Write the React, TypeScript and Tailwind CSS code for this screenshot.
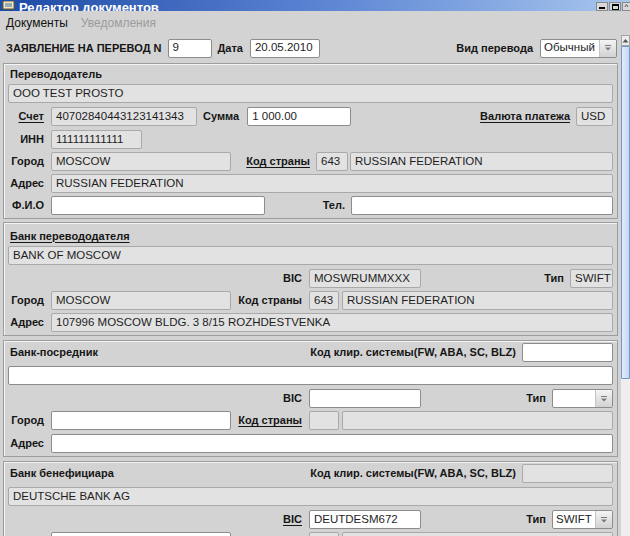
import React from 'react'

const box =
  'h-[19px] shrink-0 flex items-center px-[4px] rounded-[2px] border text-[11.5px] text-[#1e1e1e] whitespace-nowrap overflow-hidden'

function Field({ value = '', w = '', on = false }: { value?: string; w?: string; on?: boolean }) {
  return (
    <div className={`${box} ${on ? 'bg-white border-[#8c8c8c]' : 'bg-[#e2e2e2] border-[#a9a9a9]'} ${w}`}>
      {value}
    </div>
  )
}

function L({ children, u = false, w = '' }: { children: React.ReactNode; u?: boolean; w?: string }) {
  return (
    <span
      className={`shrink-0 whitespace-nowrap text-[11px] font-bold text-[#161616] ${u ? 'underline underline-offset-2' : ''} ${w}`}
    >
      {children}
    </span>
  )
}

function Arrow() {
  return (
    <svg width="8" height="6" viewBox="0 0 8 6">
      <line x1="1" y1="0.5" x2="7" y2="0.5" stroke="#7a7a7a" />
      <path d="M1 2.5 H7 L4 5.5 Z" fill="#7a7a7a" />
    </svg>
  )
}

function Combo({ value = '', w = '' }: { value?: string; w?: string }) {
  return (
    <div className={`h-[19px] shrink-0 flex rounded-[2px] border border-[#8c8c8c] bg-white overflow-hidden ${w}`}>
      <div className="flex-1 flex items-center px-[3px] text-[11.5px] text-[#1e1e1e]">{value}</div>
      <div className="w-[17px] flex items-center justify-center border-l border-[#c4c4c4] bg-gradient-to-b from-[#f4f4f4] to-[#d2d2d2]">
        <Arrow />
      </div>
    </div>
  )
}

function Panel({ children }: { children: React.ReactNode }) {
  return (
    <div className="ml-[3px] w-[615px] border border-[#9d9d9d] shadow-[inset_1px_1px_0_#f4f4f4] px-[4px] pb-[3px]">
      {children}
    </div>
  )
}

const row = 'flex items-center'

export default function App() {
  return (
    <div className="w-[630px] h-[536px] overflow-hidden bg-[#d3d3d3] font-['Liberation_Sans',Arial,sans-serif] flex flex-col">
      {/* Title bar (cut off) */}
      <div className="h-[11px] shrink-0 flex items-end justify-between bg-gradient-to-r from-[#1d4aa5] via-[#5a83d2] to-[#a9c6ee] overflow-hidden">
        <div className="flex items-end gap-[4px] pl-[2px]">
          <svg width="13" height="9" viewBox="0 0 13 9" className="mb-[1px]">
            <rect x="1" y="0" width="11" height="8" fill="#f3e7b8" stroke="#6b5a2a" />
            <line x1="3" y1="3" x2="10" y2="3" stroke="#3a6fc4" />
            <line x1="3" y1="5" x2="10" y2="5" stroke="#3a6fc4" />
          </svg>
          <span className="text-[13px] leading-[13px] font-bold text-white -mb-[3px]">Редактор документов</span>
        </div>
        <div className="flex gap-[1px]">
          <div className="w-[12px] h-[9px] bg-[#d8d8d8] border border-[#8a8a8a] flex items-end justify-center pb-[1px]">
            <div className="w-[6px] h-[2px] bg-black" />
          </div>
          <div className="w-[12px] h-[9px] bg-[#d8d8d8] border border-[#8a8a8a] flex items-center justify-center">
            <div className="w-[7px] h-[6px] border border-black border-t-2" />
          </div>
          <div className="w-[8px] h-[9px] bg-[#d8d8d8] border border-[#8a8a8a] border-r-0 flex items-center justify-center text-[8px] leading-none">
            ^
          </div>
        </div>
      </div>

      {/* Menu bar */}
      <div className="h-[24px] shrink-0 flex items-center gap-[13px] pl-[6px] text-[12px]">
        <span className="text-[#111]">Документы</span>
        <span className="text-[#9b9b9b]">Уведомления</span>
      </div>

      <div className="flex-1 flex min-h-0">
        <div className="w-[620px] shrink-0 flex flex-col">
          {/* Header */}
          <div className="h-[26px] shrink-0 flex items-center pl-[6px] pr-[3px]">
            <L>ЗАЯВЛЕНИЕ НА ПЕРЕВОД N</L>
            <Field on w="w-[44px] ml-[6px] border-[#7f9db9]" value="9" />
            <L w="ml-[6px]">Дата</L>
            <Field on w="w-[70px] ml-[7px]" value="20.05.2010" />
            <div className="flex-1" />
            <L>Вид перевода</L>
            <Combo w="w-[77px] ml-[7px]" value="Обычный" />
          </div>

          {/* Перевододатель */}
          <div className="mt-[2px]">
            <Panel>
              <div className="h-[20px] flex items-center pl-[2px]">
                <L>Перевододатель</L>
              </div>
              <div className={row}>
                <Field w="flex-1" value="OOO TEST PROSTO" />
              </div>
              <div className={`${row} mt-[4px]`}>
                <L u w="w-[36px] text-right">Счет</L>
                <Field w="w-[146px] ml-[7px]" value="40702840443123141343" />
                <L w="ml-[6px]">Сумма</L>
                <Field on w="w-[104px] ml-[8px]" value="1 000.00" />
                <div className="flex-1" />
                <L u>Валюта платежа</L>
                <Field w="w-[37px] ml-[6px]" value="USD" />
              </div>
              <div className={`${row} mt-[4px]`}>
                <L w="w-[36px] text-right">ИНН</L>
                <Field w="w-[91px] ml-[7px]" value="111111111111" />
              </div>
              <div className={`${row} mt-[3px]`}>
                <L w="w-[36px] text-right">Город</L>
                <Field w="w-[180px] ml-[7px]" value="MOSCOW" />
                <L u w="w-[79px] text-right">Код страны</L>
                <Field w="w-[32px] ml-[6px]" value="643" />
                <Field w="flex-1 ml-[2px]" value="RUSSIAN FEDERATION" />
              </div>
              <div className={`${row} mt-[3px]`}>
                <L w="w-[36px] text-right">Адрес</L>
                <Field w="flex-1 ml-[7px]" value="RUSSIAN FEDERATION" />
              </div>
              <div className={`${row} mt-[3px]`}>
                <L w="w-[36px] text-right">Ф.И.О</L>
                <Field on w="w-[214px] ml-[7px]" />
                <L w="flex-1 text-right">Тел.</L>
                <Field on w="w-[262px] ml-[6px]" />
              </div>
            </Panel>
          </div>

          {/* Банк перевододателя */}
          <div className="mt-[3px]">
            <Panel>
              <div className="h-[23px] flex items-center pl-[2px] pt-[3px]">
                <L u>Банк перевододателя</L>
              </div>
              <div className={row}>
                <Field w="flex-1" value="BANK OF MOSCOW" />
              </div>
              <div className={`${row} mt-[4px]`}>
                <L w="w-[294px] text-right">BIC</L>
                <Field w="w-[112px] ml-[7px]" value="MOSWRUMMXXX" />
                <div className="flex-1" />
                <L>Тип</L>
                <Field w="w-[43px] ml-[6px]" value="SWIFT" />
              </div>
              <div className={`${row} mt-[3px]`}>
                <L w="w-[36px] text-right">Город</L>
                <Field w="w-[180px] ml-[7px]" value="MOSCOW" />
                <L w="w-[71px] text-right">Код страны</L>
                <Field w="w-[30px] ml-[7px]" value="643" />
                <Field w="flex-1 ml-[3px]" value="RUSSIAN FEDERATION" />
              </div>
              <div className={`${row} mt-[3px]`}>
                <L w="w-[36px] text-right">Адрес</L>
                <Field w="flex-1 ml-[7px]" value="107996 MOSCOW BLDG. 3 8/15 ROZHDESTVENKA" />
              </div>
            </Panel>
          </div>

          {/* Банк-посредник */}
          <div className="mt-[4px]">
            <Panel>
              <div className={`${row} mt-[2px]`}>
                <L w="flex-1 pl-[2px]">Банк-посредник</L>
                <L>Код клир. системы(FW, ABA, SC, BLZ)</L>
                <Field on w="w-[91px] ml-[6px]" />
              </div>
              <div className={`${row} mt-[4px]`}>
                <Field on w="flex-1" />
              </div>
              <div className={`${row} mt-[4px]`}>
                <L w="w-[294px] text-right">BIC</L>
                <Field on w="w-[112px] ml-[7px]" />
                <div className="flex-1" />
                <L>Тип</L>
                <Combo w="w-[61px] ml-[6px]" />
              </div>
              <div className={`${row} mt-[3px]`}>
                <L w="w-[36px] text-right">Город</L>
                <Field on w="w-[180px] ml-[7px]" />
                <L u w="w-[71px] text-right">Код страны</L>
                <Field w="w-[30px] ml-[7px]" />
                <Field w="flex-1 ml-[3px]" />
              </div>
              <div className={`${row} mt-[4px]`}>
                <L w="w-[36px] text-right">Адрес</L>
                <Field on w="flex-1 ml-[7px]" />
              </div>
            </Panel>
          </div>

          {/* Банк бенефициара */}
          <div className="mt-[4px]">
            <Panel>
              <div className={`${row} mt-[2px]`}>
                <L w="flex-1 pl-[2px]">Банк бенефициара</L>
                <L>Код клир. системы(FW, ABA, SC, BLZ)</L>
                <Field w="w-[91px] ml-[6px]" />
              </div>
              <div className={`${row} mt-[4px]`}>
                <Field w="flex-1" value="DEUTSCHE BANK AG" />
              </div>
              <div className={`${row} mt-[4px]`}>
                <L u w="w-[294px] text-right">BIC</L>
                <Field on w="w-[112px] ml-[7px]" value="DEUTDESM672" />
                <div className="flex-1" />
                <L>Тип</L>
                <Combo w="w-[61px] ml-[6px]" value="SWIFT" />
              </div>
              {/* next row, only its top edge is in view */}
              <div className={`${row} mt-[3px]`}>
                <div className="w-[36px] shrink-0" />
                <Field on w="w-[180px] ml-[7px]" />
                <div className="w-[71px] shrink-0" />
                <Field w="w-[30px] ml-[7px]" />
                <Field w="flex-1 ml-[3px]" />
              </div>
            </Panel>
          </div>
        </div>

        {/* Scrollbar */}
        <div className="w-[9px] ml-[1px] shrink-0 flex flex-col">
          <div className="h-[11px] shrink-0 border border-[#a4a4a4] bg-[#ececec] flex items-center justify-center">
            <svg width="7" height="5" viewBox="0 0 7 5">
              <path d="M0.5 4.5 L3.5 1 L6.5 4.5 Z" fill="#555" />
            </svg>
          </div>
          <div className="h-[333px] shrink-0 border border-[#7096cd] bg-gradient-to-r from-[#e4edf9] to-[#c4d8f3] rounded-[1px]" />
          <div className="flex-1 bg-[#eeeeee]" />
        </div>
      </div>
    </div>
  )
}
